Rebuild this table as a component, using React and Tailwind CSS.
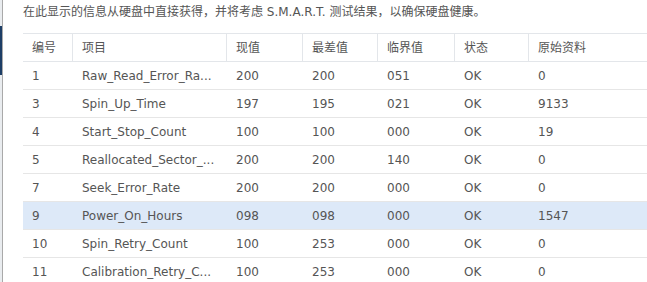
import React from 'react';

const rows = [
  ['1', 'Raw_Read_Error_Ra...', '200', '200', '051', 'OK', '0'],
  ['3', 'Spin_Up_Time', '197', '195', '021', 'OK', '9133'],
  ['4', 'Start_Stop_Count', '100', '100', '000', 'OK', '19'],
  ['5', 'Reallocated_Sector_...', '200', '200', '140', 'OK', '0'],
  ['7', 'Seek_Error_Rate', '200', '200', '000', 'OK', '0'],
  ['9', 'Power_On_Hours', '098', '098', '000', 'OK', '1547'],
  ['10', 'Spin_Retry_Count', '100', '253', '000', 'OK', '0'],
  ['11', 'Calibration_Retry_C...', '100', '253', '000', 'OK', '0'],
];

const headers = ['编号', '项目', '现值', '最差值', '临界值', '状态', '原始资料'];

const cols = 'grid grid-cols-[50px_154px_76px_75px_77px_74px_1fr]';

const App = () => {
  return (
    <div
      className="flex w-[647px] h-[282px] overflow-hidden bg-white text-[#555] text-[12px]"
      style={{ fontFamily: '"DejaVu Sans", "Noto Sans CJK SC", sans-serif' }}
    >
      {/* window edge behind */}
      <div className="flex w-[3px] shrink-0">
        <div className="flex flex-col w-[2px] bg-[#e9ecef]">
          <div className="h-[26px]" />
          <div className="h-[49px] bg-[#1d3e66]" />
        </div>
        <div className="w-px bg-[#a9a9a9]" />
      </div>

      {/* Main */}
      <div className="flex-1 pl-[20px]">
        <p className="h-[33px] pt-[4px] leading-[16px] text-[#555]">
          在此显示的信息从硬盘中直接获得，并将考虑 S.M.A.R.T. 测试结果，以确保硬盘健康。
        </p>
        <div className="border-t border-[#e3e6ea]">
          <div className={`${cols} h-[28px] border-b border-[#e3e6ea] text-[#555]`}>
            {headers.map((h, i) => (
              <div
                key={h}
                className={`flex items-center pl-[9px] ${i < headers.length - 1 ? 'border-r border-[#e3e6ea]' : ''}`}
              >
                {h}
              </div>
            ))}
          </div>
          {rows.map(r => (
            <div
              key={r[0]}
              className={`${cols} h-[28px] border-b border-[#e6e6e6] ${r[0] === '9' ? 'bg-[#dde9f8]' : ''}`}
            >
              {r.map((c, i) => (
                <div key={i} className="flex items-center pl-[9px] whitespace-nowrap overflow-hidden">
                  {c}
                </div>
              ))}
            </div>
          ))}
        </div>
      </div>
    </div>
  );
};

export default App;
